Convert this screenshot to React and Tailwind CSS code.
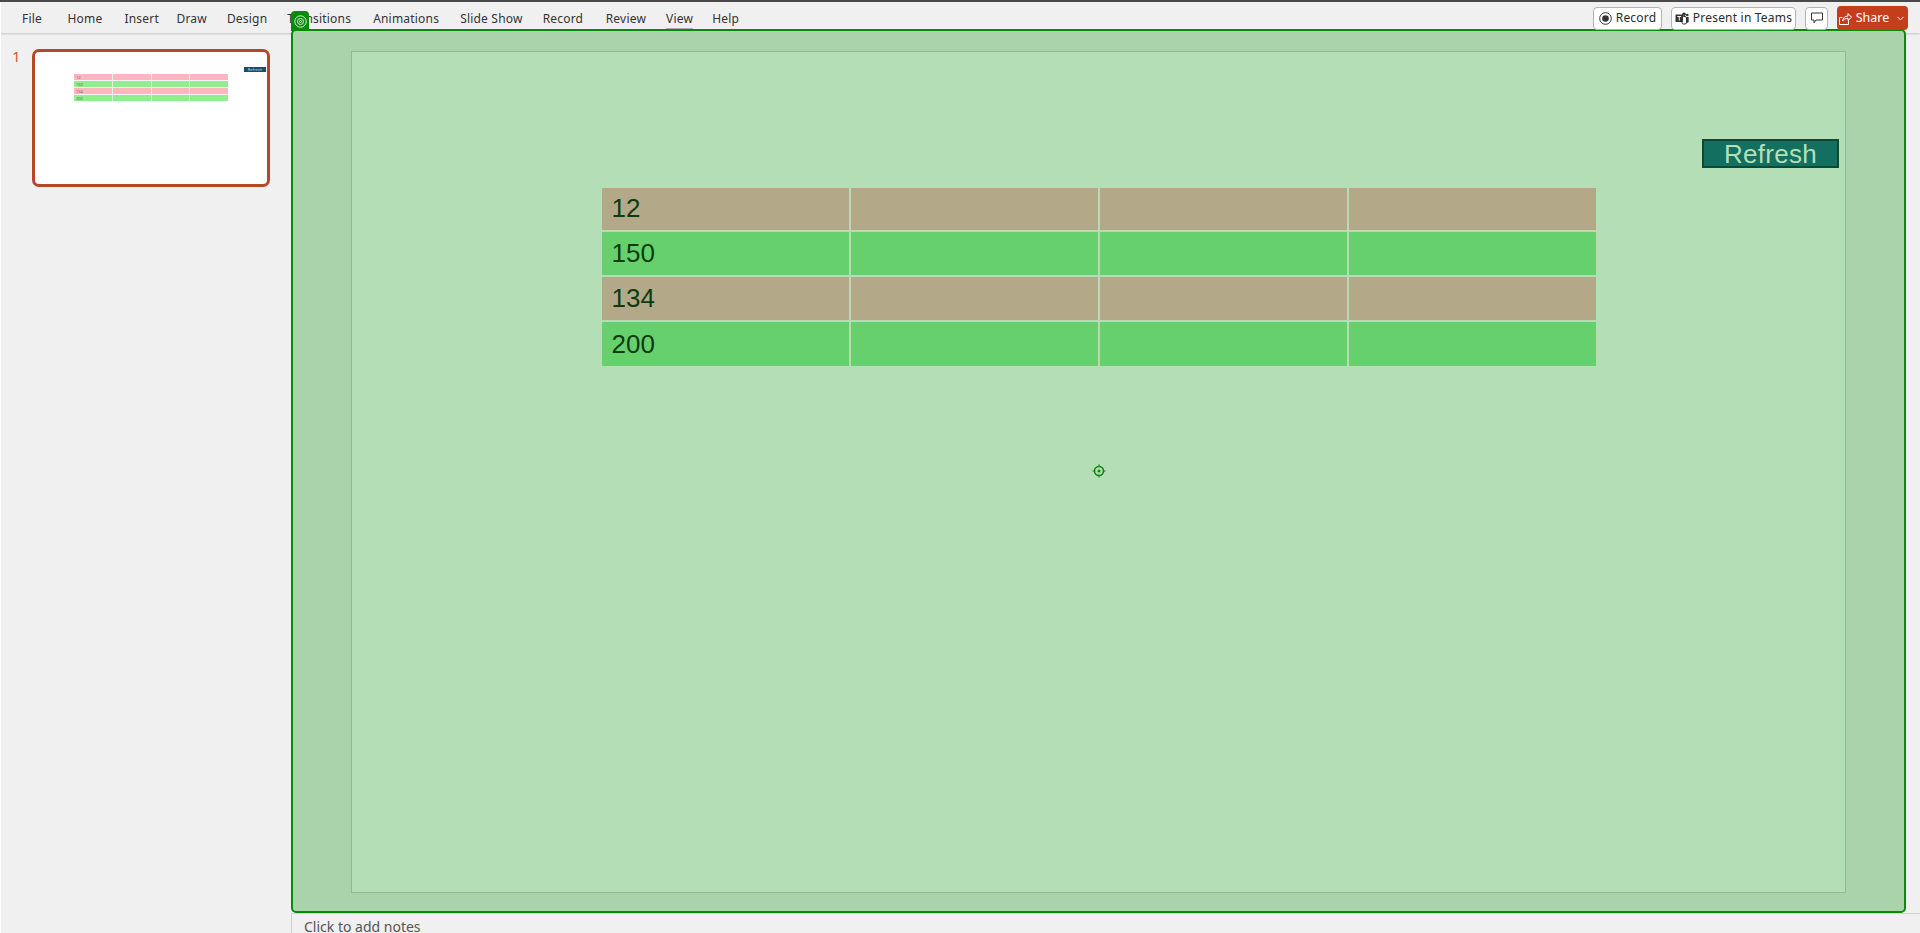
import React from "react";
import { ChevronDown } from "lucide-react";

const tabs = [
  { label: "File", className: "mr-[25.5px]" },
  { label: "Home", className: "mr-[22px]" },
  { label: "Insert", className: "mr-[17.5px]" },
  { label: "Draw", className: "mr-[20px]" },
  { label: "Design", className: "mr-[20px]" },
  { label: "Transitions", className: "mr-[22px]" },
  { label: "Animations", className: "mr-[21px]" },
  { label: "Slide Show", className: "mr-[20px]" },
  { label: "Record", className: "mr-[22.5px]" },
  { label: "Review", className: "mr-[20px]" },
  { label: "View", className: "mr-[19px]" },
  { label: "Help", className: "" },
];

const rows = [
  { value: "12", height: "h-[42px] pb-[2px]", color: "bg-[#b3a888]", thumb: "bg-[#ffb6c1]" },
  { value: "150", height: "h-[43px]", color: "bg-[#66d16c]", thumb: "bg-[#90ee90]" },
  { value: "134", height: "h-[43px]", color: "bg-[#b3a888]", thumb: "bg-[#ffb6c1]" },
  { value: "200", height: "h-[44px]", color: "bg-[#66d16c]", thumb: "bg-[#90ee90]" },
];

const TopButton = ({ children, className }) => (
  <button className={`h-[23px] flex items-center rounded-[4px] border border-[#b4b4b4] bg-white text-[12px] tracking-[0.2px] text-[#2b2b2b] ${className}`}>
    {children}
  </button>
);

const SlideThumb = () => (
  <div className="w-[238px] h-[138px] rounded-[7px] border-[3px] border-[#b7472a] bg-white flex flex-col">
    <div className="flex justify-end pt-[15px] pr-[1px]">
      <div className="w-[22px] h-[5px] bg-[#12506b] text-[4px] leading-[5px] text-center text-[#b5dfe0]">Refresh</div>
    </div>
    <div className="mt-[2px] ml-[39px] w-[154px] grid grid-cols-4 gap-x-[1px] bg-[#e4f2e4]">
      {rows.map((row) =>
        [0, 1, 2, 3].map((col) => (
          <div key={row.value + col} className={`h-[7px] pl-[2px] text-[4px] leading-[7px] text-[#666666] border-b border-[#f4f4f0] ${row.thumb}`}>
            {col === 0 ? row.value : ""}
          </div>
        ))
      )}
    </div>
  </div>
);

const App = () => {
  return (
    <div className="w-full h-[933px] overflow-hidden flex flex-col bg-[#f0f0f0] font-['Noto_Sans',sans-serif]">
      <div className="h-[2px] bg-[#4a4a4a]" />

      {/* ribbon tabs */}
      <header className="h-[31px] flex items-center justify-between pl-[22px] pr-[12px] shadow-[0_1px_2px_rgba(0,0,0,0.18)] border-l border-white">
        <nav className="flex items-center text-[12px] tracking-[0.2px] text-[#333333] -ml-[1px] mt-[2px]">
          {tabs.map((tab) => (
            <span key={tab.label} className={`relative ${tab.className}`}>
              {tab.label}
              {tab.label === "View" && (
                <span className="absolute left-0 right-0 top-[18px] h-[1px] bg-[#b0b0b0]" />
              )}
            </span>
          ))}
        </nav>
        <div className="flex items-center gap-[9px] relative z-20 mt-[1px]">
          <TopButton className="w-[69px] justify-center gap-[4px]">
            <svg width="13" height="13" viewBox="0 0 13 13">
              <circle cx="6.5" cy="6.5" r="5.8" fill="none" stroke="#333333" />
              <circle cx="6.5" cy="6.5" r="3.3" fill="#333333" />
            </svg>
            Record
          </TopButton>
          <TopButton className="w-[125px] justify-center gap-[4px]">
            <svg width="14" height="13" viewBox="0 0 14 13">
              <circle cx="9" cy="2.2" r="1.8" fill="#333333" />
              <circle cx="12.3" cy="3" r="1.3" fill="#333333" />
              <rect x="7" y="4.5" width="4.5" height="7.5" rx="1.5" fill="none" stroke="#333333" />
              <path d="M11.5 5h2.2v4.2a2 2 0 0 1-2.2 1.8z" fill="#333333" />
              <rect x="0.5" y="2.5" width="7.5" height="7.5" rx="0.6" fill="#333333" />
              <path d="M2.3 4.5h3.9M4.25 4.5v4" stroke="#ffffff" strokeWidth="1" />
            </svg>
            Present in Teams
          </TopButton>
          <TopButton className="w-[23px] justify-center">
            <svg width="12" height="12" viewBox="0 0 12 12">
              <path d="M0.5 1h11v7H5L3 10.8V8H0.5z" fill="none" stroke="#333333" />
            </svg>
          </TopButton>
          <button className="h-[24px] w-[71px] flex items-center justify-center gap-[4px] rounded-[4px] bg-[#c43e1c] text-[12.5px] text-white">
            <svg width="13" height="13" viewBox="0 0 13 13" fill="none" stroke="#ffffff">
              <path d="M9.5 7.5v5h-9v-7h3" />
              <path d="M3.5 9c.5-3 2.5-5 5.5-5V1.5l3.5 3.7L9 8.5V6.3c-2.5 0-4.2 1-5.5 2.7z" />
            </svg>
            Share
            <ChevronDown size={11} strokeWidth={2} className="ml-[2px]" />
          </button>
        </div>
      </header>

      <div className="flex flex-1 min-h-0">
        {/* slide thumbnails */}
        <aside className="w-[291px] shrink-0 flex items-start pt-[16px] pl-[11px] border-l border-white">
          <span className="w-[20px] -mt-[3px] text-[15px] leading-[20px] text-[#d0583a]">1</span>
          <SlideThumb />
        </aside>

        <main className="flex-1 flex flex-col min-w-0">
          {/* selected canvas */}
          <section className="relative z-10 -mt-[4px] w-[1615px] h-[884px] shrink-0 rounded-[5px] border-2 border-[#0a8a0a] bg-[#abd3ab] pl-[58px] pt-[20px]">
            <div className="absolute -left-[2px] -top-[20px] w-[18px] h-[20px] rounded-t-[4px] bg-[#0a8a0a] flex items-center justify-center">
              <svg width="13" height="13" viewBox="0 0 13 13" fill="none" stroke="#d8efd8">
                <circle cx="6.5" cy="6.5" r="5.7" />
                <circle cx="6.5" cy="6.5" r="3" />
                <circle cx="6.5" cy="6.5" r="1" />
              </svg>
            </div>

            <div className="relative w-[1495px] h-[842px] border border-[#8fb893] bg-[#b4deb6] font-['Liberation_Sans',sans-serif]">
              <div className="flex justify-end pt-[87px] pr-[6px]">
                <button className="w-[137px] h-[29px] flex items-center justify-center border-2 border-[#0a4a32] bg-[#136f5f] text-[26px] tracking-[0.3px] leading-none text-[#b5dfb7]">
                  Refresh
                </button>
              </div>

              <div className="mt-[20px] mx-auto w-[994px] grid grid-cols-4 gap-[2px] bg-[#bcd9b5]">
                {rows.map((row) =>
                  [0, 1, 2, 3].map((col) => (
                    <div
                      key={row.value + col}
                      className={`${row.height} flex items-center pl-[10px] text-[26px] text-[#0d3b10] ${row.color}`}
                    >
                      {col === 0 ? row.value : ""}
                    </div>
                  ))
                )}
              </div>

              {/* rotate handle in the middle of the slide */}
              <svg className="absolute left-[740px] top-[412px]" width="14" height="14" viewBox="0 0 14 14" fill="none" stroke="#0a8a0a">
                <circle cx="7" cy="7" r="4.5" strokeWidth="1.6" />
                <circle cx="7" cy="7" r="1.5" fill="#0a8a0a" stroke="none" />
                <path d="M7 0.5v2M7 11.5v2M0.5 7h2M11.5 7h2" strokeWidth="1.2" />
              </svg>
            </div>
          </section>

          {/* notes pane */}
          <div className="flex-1 border-l border-t border-[#d0d0d0] pl-[12px] pt-[3px] text-[14px] leading-[20px] text-[#555555]">
            Click to add notes
          </div>
        </main>
      </div>
    </div>
  );
};

export default App;
